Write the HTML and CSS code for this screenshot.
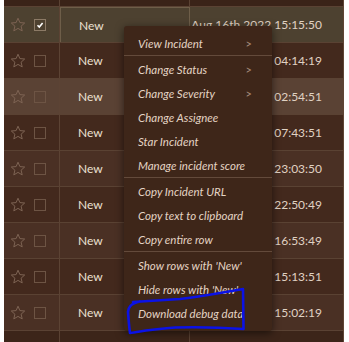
FILE: index.html
```html
<!DOCTYPE html>
<html>
<head>
<meta charset="utf-8">
<link rel="stylesheet" href="styles.css">
</head>
<body>
<div class="table">
  <div class="band"><div class="c1"></div><div class="c2"></div><div class="c3"></div></div>

  <div class="row selected">
    <div class="c1"><svg class="star" viewBox="0 0 16 16"><path d="M8 1.2l1.9 4.4 4.8.4-3.6 3.2 1.1 4.7L8 11.4l-4.2 2.5 1.1-4.7L1.3 6l4.8-.4z"/></svg><span class="box checked"><svg viewBox="0 0 10 10"><path d="M2.5 5.3l1.8 1.8 3.3-4"/></svg></span></div>
    <div class="c2 focus">New</div>
    <div class="c3">Aug 16th 2022 15:15:50</div>
  </div>
  <div class="row even">
    <div class="c1"><svg class="star" viewBox="0 0 16 16"><path d="M8 1.2l1.9 4.4 4.8.4-3.6 3.2 1.1 4.7L8 11.4l-4.2 2.5 1.1-4.7L1.3 6l4.8-.4z"/></svg><span class="box"></span></div>
    <div class="c2">New</div>
    <div class="c3">Aug 16th 2022 04:14:19</div>
  </div>
  <div class="row hover">
    <div class="c1"><svg class="star" viewBox="0 0 16 16"><path d="M8 1.2l1.9 4.4 4.8.4-3.6 3.2 1.1 4.7L8 11.4l-4.2 2.5 1.1-4.7L1.3 6l4.8-.4z"/></svg><span class="box"></span></div>
    <div class="c2">New</div>
    <div class="c3">Aug 16th 2022 02:54:51</div>
  </div>
  <div class="row even">
    <div class="c1"><svg class="star" viewBox="0 0 16 16"><path d="M8 1.2l1.9 4.4 4.8.4-3.6 3.2 1.1 4.7L8 11.4l-4.2 2.5 1.1-4.7L1.3 6l4.8-.4z"/></svg><span class="box"></span></div>
    <div class="c2">New</div>
    <div class="c3">Aug 16th 2022 07:43:51</div>
  </div>
  <div class="row odd">
    <div class="c1"><svg class="star" viewBox="0 0 16 16"><path d="M8 1.2l1.9 4.4 4.8.4-3.6 3.2 1.1 4.7L8 11.4l-4.2 2.5 1.1-4.7L1.3 6l4.8-.4z"/></svg><span class="box"></span></div>
    <div class="c2">New</div>
    <div class="c3">Aug 15th 2022 23:03:50</div>
  </div>
  <div class="row even">
    <div class="c1"><svg class="star" viewBox="0 0 16 16"><path d="M8 1.2l1.9 4.4 4.8.4-3.6 3.2 1.1 4.7L8 11.4l-4.2 2.5 1.1-4.7L1.3 6l4.8-.4z"/></svg><span class="box"></span></div>
    <div class="c2">New</div>
    <div class="c3">Aug 15th 2022 22:50:49</div>
  </div>
  <div class="row odd">
    <div class="c1"><svg class="star" viewBox="0 0 16 16"><path d="M8 1.2l1.9 4.4 4.8.4-3.6 3.2 1.1 4.7L8 11.4l-4.2 2.5 1.1-4.7L1.3 6l4.8-.4z"/></svg><span class="box"></span></div>
    <div class="c2">New</div>
    <div class="c3">Aug 15th 2022 16:53:49</div>
  </div>
  <div class="row even">
    <div class="c1"><svg class="star" viewBox="0 0 16 16"><path d="M8 1.2l1.9 4.4 4.8.4-3.6 3.2 1.1 4.7L8 11.4l-4.2 2.5 1.1-4.7L1.3 6l4.8-.4z"/></svg><span class="box"></span></div>
    <div class="c2">New</div>
    <div class="c3">Aug 15th 2022 15:13:51</div>
  </div>
  <div class="row odd">
    <div class="c1"><svg class="star" viewBox="0 0 16 16"><path d="M8 1.2l1.9 4.4 4.8.4-3.6 3.2 1.1 4.7L8 11.4l-4.2 2.5 1.1-4.7L1.3 6l4.8-.4z"/></svg><span class="box"></span></div>
    <div class="c2">New</div>
    <div class="c3">Aug 15th 2022 15:02:19</div>
  </div>
  <div class="foot"><div class="c1"></div><div class="c2"></div><div class="c3"></div></div>

  <div class="menu">
    <div class="item">View Incident<span class="chev">&gt;</span></div>
    <div class="sep"></div>
    <div class="item">Change Status<span class="chev">&gt;</span></div>
    <div class="item">Change Severity<span class="chev">&gt;</span></div>
    <div class="item">Change Assignee</div>
    <div class="item">Star Incident</div>
    <div class="item">Manage incident score</div>
    <div class="sep"></div>
    <div class="item">Copy Incident URL</div>
    <div class="item">Copy text to clipboard</div>
    <div class="item">Copy entire row</div>
    <div class="sep"></div>
    <div class="item">Show rows with 'New'</div>
    <div class="item">Hide rows with 'New'</div>
    <div class="item">Download debug data</div>
  </div>

  <svg class="mark" viewBox="0 0 349 342" width="349" height="342">
    <path d="M133 302 C150 301 165 300 180 299 C205 296 225 292 243 289 L243.5 329 C215 327 190 327 175 327.5 C158 328.5 143 331 130 333 C129 326 128.5 318 128 312 C128.5 307 130 304 140 301.5"/>
  </svg>
</div>
</body>
</html>
```
FILE: styles.css
```css
* { box-sizing: border-box; }
html, body { margin: 0; padding: 0; background: #ffffff; }
body { font-family: Lato, "Open Sans", sans-serif; }

.table {
  position: relative;
  margin-left: 4px;
  width: 340px;
  height: 342px;
  background: #3c2519;
  border-right: 1px solid #5e4535;
  display: flex;
  flex-direction: column;
  overflow: hidden;
}

.band, .row, .foot { display: flex; flex: none; }
.band { height: 6px; background: #3a2318; }
.foot { flex: 1; background: #3c2519; border-top: 1px solid #5a4233; }
.band .c1, .foot .c1 { width: 56px; border-right: 1px solid #5a4233; }
.band .c2, .foot .c2 { width: 130px; border-right: 1px solid #5a4233; }

.row {
  height: 36px;
  border-top: 1px solid #5a4233;
  color: #ece0d3;
  font-size: 12px;
}
.row.odd { background: #4a3024; }
.row.even { background: #43291d; }
.row.hover { background: #5a4234; }
.row.selected { background: #4d4130; }

.c1 {
  width: 56px;
  display: flex;
  align-items: center;
  border-right: 1px solid #5c4334;
  padding-left: 6px;
  gap: 8px;
}
.star { width: 16px; height: 16px; fill: none; stroke: #7d6353; stroke-width: 1; stroke-linejoin: miter; }
.box {
  width: 12px; height: 12px;
  border: 1px solid #6d5444;
  display: block;
}
.box.checked { border-color: #8c7a66; }
.box svg { display: block; width: 10px; height: 10px; fill: none; stroke: #ffffff; stroke-width: 1.6; }

.c2 {
  width: 130px;
  display: flex;
  align-items: center;
  padding-left: 18px;
  font-weight: 400;
}
.c2.focus { border: 1px solid #6e5e49; border-bottom: none; }

.c3 {
  flex: 1;
  display: flex;
  align-items: center;
  justify-content: flex-end;
  padding-right: 21px;
  font-weight: 400;
  color: #e0d2c3;
}

.menu {
  position: absolute;
  left: 120px;
  top: 26px;
  width: 148px;
  padding: 5px 0 6px;
  background: #3e2619;
  border-radius: 3px;
  box-shadow: 0 2px 8px rgba(0, 0, 0, 0.55);
}
.item {
  height: 24px;
  display: flex;
  align-items: center;
  justify-content: space-between;
  padding: 0 20px 0 14px;
  font-style: italic;
  font-size: 11.5px;
  color: #e4d4c4;
}
.chev { font-style: normal; color: #a88d7b; font-size: 11px; }
.sep { height: 2px; border-top: 1px solid #634a3b; }

.mark {
  position: absolute;
  left: -4px;
  top: 0;
  fill: none;
  stroke: #0b12e6;
  stroke-width: 2.6;
  stroke-linecap: round;
  stroke-linejoin: round;
}
```
